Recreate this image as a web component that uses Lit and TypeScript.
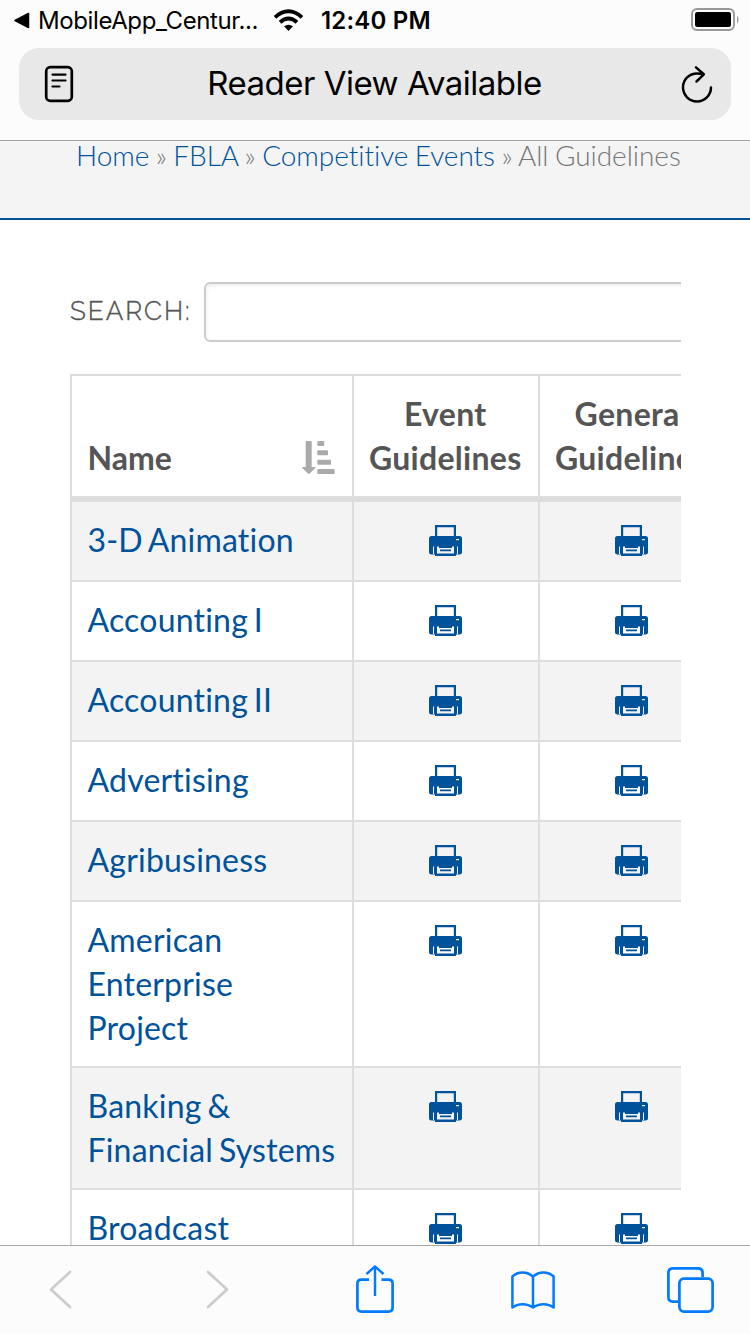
import { LitElement, html, css, svg } from "lit";
import { customElement, property } from "lit/decorators.js";

@customElement("print-icon")
class PrintIcon extends LitElement {
  static styles = css`
    :host { display: block; width: 33px; height: 31px; }
    svg { display: block; fill: #00529b; }
  `;
  render() {
    return html`<svg width="33" height="31" viewBox="0 0 33 31">
      <path fill-rule="evenodd" d="M6 0H27V11H30.500A2.500 2.500 0 0 1 33 13.500V27A2.500 2.500 0 0 1 30.500 29.500H27V31H6V29.500H2.500A2.500 2.500 0 0 1 0 27V13.500A2.500 2.500 0 0 1 2.500 11H6ZM8.200 2.200V11H24.800V2.200ZM27 14V15.200H30V14ZM4 21.500V29H5V21.500ZM28 21.500V29H29V21.500ZM8 21.500V28.500H25V21.500H23V23H10V21.500ZM11 24.500H22V26.200H11Z"/>
    </svg>`;
  }
}

@customElement("status-bar")
class StatusBar extends LitElement {
  static styles = css`
    :host { display: flex; align-items: center; height: 40px; padding: 0 11px 0 13px; font: 24px/40px Inter, sans-serif; color: #000; white-space: nowrap; }
    svg { display: block; flex: none; }
    .app { width: 221px; margin-left: 8px; padding-top: 2px; letter-spacing: -0.4px; }
    .wifi { margin-left: 15px; }
    .time { margin-left: 17px; padding-top: 2px; font-weight: 600; letter-spacing: 0.2px; }
    .battery { margin-left: auto; }
  `;
  render() {
    return html`
      <svg width="17" height="40" viewBox="13 0 17 40"><path d="M15 20.500 28.500 13.500V27.500Z" stroke="#000" stroke-width="1.500" stroke-linejoin="round"/></svg>
      <span class="app">MobileApp_Centur...</span>
      <svg class="wifi" width="30" height="40" viewBox="274 0 30 40">
        <g fill="none" stroke="#000" stroke-width="3.800">
          <path d="M275 17.300Q288.500 5.200 302 17.300"/>
          <path d="M280 22.200Q288.500 14.800 297 22.200"/>
        </g>
        <path d="M284 26.300Q288.500 23 293 26.300L288.500 31Z"/>
      </svg>
      <span class="time">12:40 PM</span>
      <svg class="battery" width="49" height="40" viewBox="690 0 49 40">
        <rect x="692" y="9" width="42" height="21" rx="5" fill="#fff" stroke="#999" stroke-width="1.900"/>
        <rect x="695" y="12" width="36" height="15" rx="2.500"/>
        <path d="M737 15.500Q740 19.500 737 23.500Z" fill="#999"/>
      </svg>`;
  }
}

@customElement("address-bar")
class AddressBar extends LitElement {
  static styles = css`
    :host { display: flex; align-items: center; justify-content: space-between; box-sizing: border-box; height: 72px; margin: 8px 19px 0; padding: 0 16px 0 24px; border-radius: 20px; background: #e8e8e8; }
    svg { display: block; fill: none; stroke: #000; stroke-linecap: round; stroke-linejoin: round; }
    .title { padding: 0 5px 2px 0; font: 33px/70px Inter, sans-serif; letter-spacing: -0.500px; color: #000; white-space: nowrap; }
  `;
  render() {
    return html`
      <svg width="32" height="72" viewBox="43 48 32 72">
        <rect x="46.200" y="67.200" width="25.600" height="33.600" rx="4" stroke-width="2.700"/>
        <path d="M52.500 74.600H65.500M52.500 80.500H65.500M52.500 86.500H59.500" stroke-width="2.200"/>
      </svg>
      <span class="title">Reader View Available</span>
      <svg width="36" height="72" viewBox="679 48 36 72">
        <path d="M711 87.500A14 14 0 1 1 697 73.400Q700 73.400 703.500 74.400M696 67.400 703.800 74.300 696.500 81.500" stroke-width="2.500"/>
      </svg>`;
  }
}

@customElement("bottom-toolbar")
class BottomToolbar extends LitElement {
  static styles = css`
    :host { display: flex; gap: 105px; box-sizing: border-box; height: 89px; padding: 16px 0 0 35px; border-top: 1px solid #a9a9a9; background: #fcfcfc; }
    svg { display: block; flex: none; fill: none; stroke: #007aff; stroke-width: 2.700; stroke-linejoin: round; stroke-linecap: round; }
    .disabled { stroke: #cccccc; stroke-width: 2.700; }
    .butt { stroke-linecap: butt; }
  `;
  render() {
    return html`
      <svg class="disabled" width="52" height="52" viewBox="35 1262 52 52"><path d="M70 1272 51 1289.500 70 1307"/></svg>
      <svg class="disabled" width="52" height="52" viewBox="192 1262 52 52"><path d="M208 1272 227 1289.500 208 1307"/></svg>
      <svg class="butt" width="52" height="52" viewBox="349 1262 52 52"><path d="M369 1279.700H361.500Q357.400 1279.700 357.400 1283.800V1307.500Q357.400 1311.600 361.500 1311.600H388.500Q392.600 1311.600 392.600 1307.500V1283.800Q392.600 1279.700 388.500 1279.700H381.500"/><path d="M375 1296V1267M366.500 1274 375 1266.500 383.500 1274" stroke-width="2.400"/></svg>
      <svg width="52" height="52" viewBox="506 1262 52 52"><path d="M512.400 1307.500V1276.500C518 1271 527 1271 533 1276.500C539 1271 548 1271 553.600 1276.500V1307.500C548 1303 539 1303 533 1307.500C527 1303 518 1303 512.400 1307.500ZM533 1276.500V1307.500" stroke-width="2.500"/></svg>
      <svg width="52" height="52" viewBox="663 1262 52 52"><path class="butt" d="M678 1301.600H673Q668.400 1301.600 668.400 1297V1273Q668.400 1268.400 673 1268.400H698Q702.600 1268.400 702.600 1273V1277"/><rect x="679.400" y="1278.600" width="33.200" height="33" rx="4.500"/></svg>`;
  }
}

@customElement("events-table")
class EventsTable extends LitElement {
  @property({ attribute: false }) names: string[] = [];
  static styles = css`
    :host { display: block; width: 654px; box-sizing: border-box; border-top: 2px solid #ddd; font: 32px/44px Lato, sans-serif; font-variant-ligatures: none; }
    .row { display: grid; grid-template-columns: 282px 186px 186px; box-sizing: border-box; min-height: 80px; border-bottom: 2px solid #ddd; }
    .row:nth-child(even) { background: #f3f3f3; }
    .cell { border-left: 2px solid #ddd; padding: 16px 14px 16px 15.500px; }
    .name { color: #00529b; letter-spacing: 0.2px; word-spacing: -2.500px; }
    .print { display: flex; justify-content: center; align-items: flex-start; padding: 23px 1px 0 0; }
    .head { min-height: 126px; border-bottom-width: 6px; font-weight: 700; color: #555; }
    .head .cell { padding: 16px 1.500px 16px 0; text-align: center; letter-spacing: 0.300px; }
    .head .first { display: flex; justify-content: space-between; align-items: flex-end; padding: 16px 17px 16px 15.500px; letter-spacing: 0; }
    svg { display: block; fill: #aaa; margin-bottom: 6px; }
  `;
  render() {
    return html`
      <div class="row head">
        <div class="cell first"><span>Name</span>
          <svg width="33" height="33" viewBox="0 0 33 33">
            <path d="M4.700 0H8.700Q9.700 0 9.700 1V26H13Q14.200 26 13.400 26.900L7.700 32.500Q6.800 33.300 5.900 32.500L.3 26.900Q-.3 26 .8 26H3.700V1Q3.700 0 4.700 0Z"/>
            ${[7, 10.700, 13.700, 17.400].map((w, i) => svg`<rect x="15.300" y=${i * 9.330} width=${w} height="5" rx="1"/>`)}
          </svg>
        </div>
        <div class="cell">Event<br>Guidelines</div>
        <div class="cell">General<br>Guidelines</div>
      </div>
      ${this.names.map((n) => html`<div class="row">
        <div class="cell name">${n}</div>
        <div class="cell print"><print-icon></print-icon></div>
        <div class="cell print"><print-icon></print-icon></div>
      </div>`)}`;
  }
}

@customElement("app-root")
class AppRoot extends LitElement {
  static styles = css`
    :host { display: flex; flex-direction: column; width: 750px; height: 1334px; overflow: hidden; background: #fff; }
    .top { flex: none; box-sizing: border-box; height: 141px; border-bottom: 1px solid #a5a5a5; background: #fcfcfc; }
    .crumbs { flex: none; box-sizing: border-box; height: 79px; padding-left: 76px; border-bottom: 2px solid #00529b; background: #f4f4f4; font: 300 28px/28px Lato, sans-serif; letter-spacing: -0.050px; word-spacing: -1.100px; font-variant-ligatures: none; color: #777; white-space: nowrap; }
    .crumbs a { color: #00529b; }
    .page { flex: 1; min-height: 0; width: 681px; box-sizing: border-box; padding: 62px 0 0 70px; overflow: hidden; }
    .search { display: flex; align-items: center; height: 60px; margin-bottom: 32px; }
    .label { flex: none; width: 134px; padding-bottom: 2px; font: 300 26px/56px Raleway, Lato, sans-serif; letter-spacing: 2px; color: #555; -webkit-text-stroke: 0.400px #555; }
    .field { flex: none; box-sizing: border-box; width: 520px; height: 60px; border: 2px solid #ccc; border-radius: 6px; box-shadow: inset 0 2px 4px rgba(0, 0, 0, 0.075); background: #fff; }
    bottom-toolbar { flex: none; }
  `;
  names = ["3-D Animation", "Accounting I", "Accounting II", "Advertising", "Agribusiness", "American Enterprise Project", "Banking & Financial Systems", "Broadcast Journalism"];
  render() {
    return html`
      <header class="top"><status-bar></status-bar><address-bar></address-bar></header>
      <nav class="crumbs"><a>Home</a> » <a>FBLA</a> » <a>Competitive Events</a> » All Guidelines</nav>
      <main class="page">
        <div class="search"><span class="label">SEARCH:</span><div class="field"></div></div>
        <events-table .names=${this.names}></events-table>
      </main>
      <bottom-toolbar></bottom-toolbar>`;
  }
}
